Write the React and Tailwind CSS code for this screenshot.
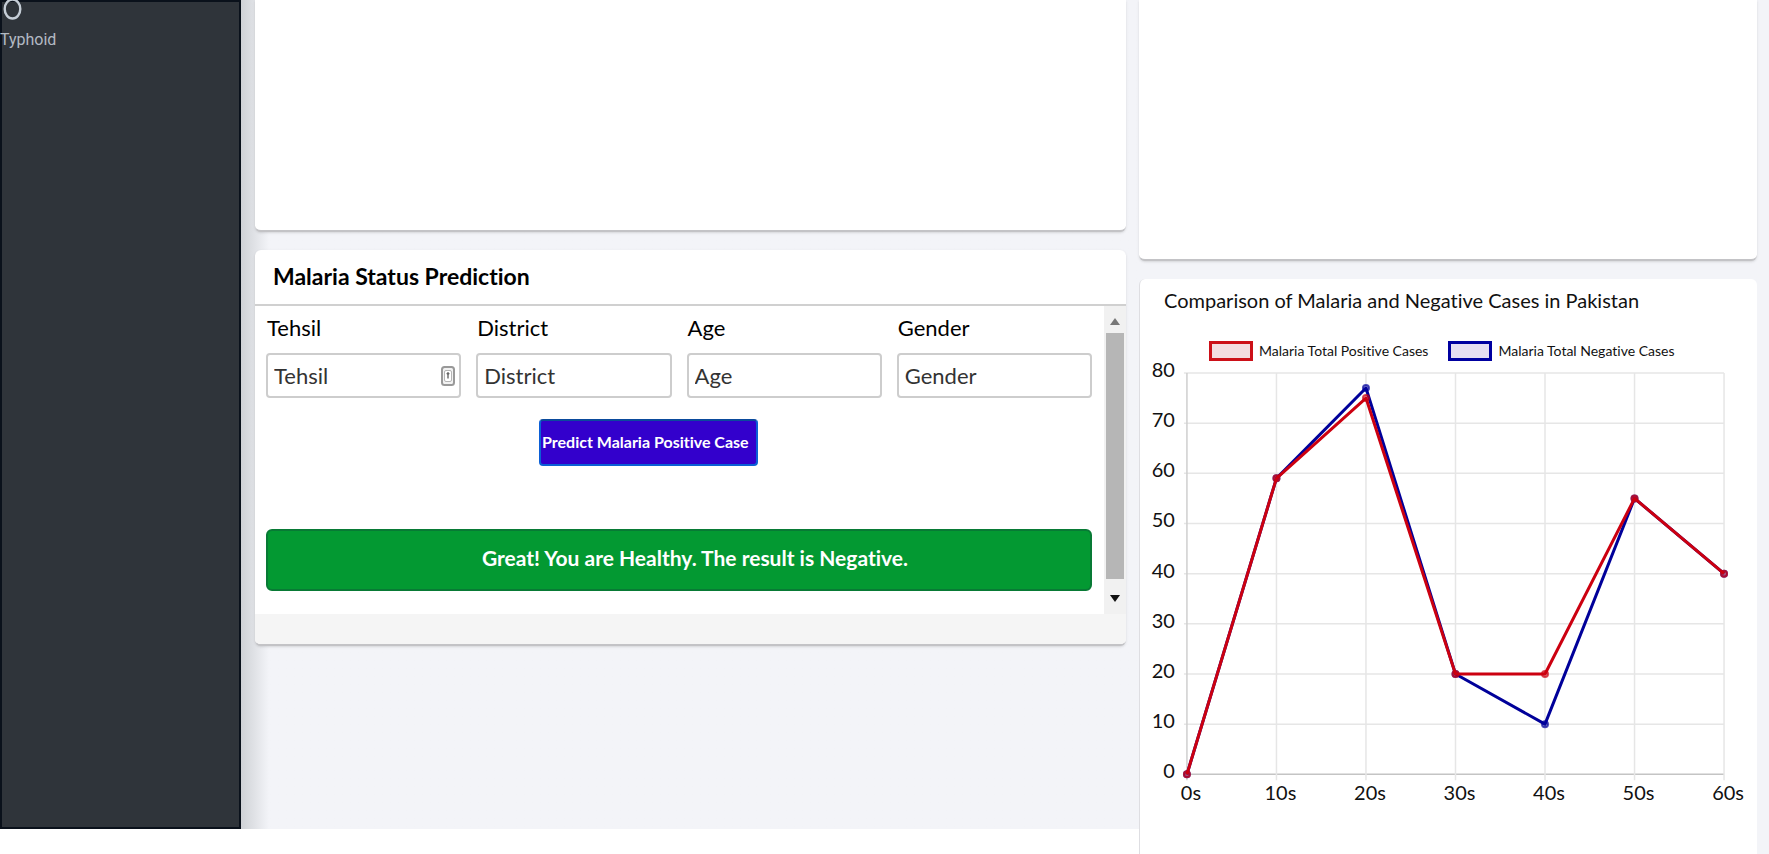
import { useState } from 'react'

const fields = [
  { id: 'tehsil', label: 'Tehsil', autofill: true },
  { id: 'district', label: 'District' },
  { id: 'age', label: 'Age' },
  { id: 'gender', label: 'Gender' },
]

const positive = [0, 59, 75, 20, 20, 55, 40]
const negative = [0, 59, 77, 20, 10, 55, 40]
const seconds = [0, 10, 20, 30, 40, 50, 60]
const ticks = [80, 70, 60, 50, 40, 30, 20, 10, 0]

// Plot area inside the chart viewBox
const plot = { left: 47, right: 585, top: 12, bottom: 414 }
const px = (i) => plot.left + (i * (plot.right - plot.left)) / (seconds.length - 1)
const py = (v) => plot.bottom - (v * (plot.bottom - plot.top)) / 80

function Series({ values, color }) {
  return (
    <g fill="none" stroke={color}>
      <polyline
        points={values.map((v, i) => `${px(i)},${py(v)}`).join(' ')}
        strokeWidth="3"
        strokeLinejoin="round"
      />
      {values.map((v, i) => (
        <circle key={i} cx={px(i)} cy={py(v)} r="3" strokeWidth="2" fill={color} fillOpacity="0.4" strokeOpacity="0.7" />
      ))}
    </g>
  )
}

function CasesChart() {
  return (
    <svg viewBox="0 0 618 446" className="block w-full overflow-visible" role="img" aria-label="Malaria cases over time">
      <g strokeWidth="1.5">
        {ticks.map((t) => (
          <line key={t} x1={plot.left - 3} x2={plot.right} y1={py(t)} y2={py(t)} stroke={t === 0 ? '#c4c4c4' : '#e6e6e6'} />
        ))}
        {seconds.map((s, i) => (
          <line key={s} x1={px(i)} x2={px(i)} y1={plot.top} y2={plot.bottom + 6} stroke={i === 0 ? '#cfcfcf' : '#e6e6e6'} />
        ))}
      </g>
      <Series values={negative} color="#00009a" />
      <Series values={positive} color="#cc0010" />
      <g fill="#111" fontSize="20">
        {ticks.map((t) => (
          <text key={t} x="35" y={py(t) + 4} textAnchor="end">{t}</text>
        ))}
        {seconds.map((s, i) => (
          <text key={s} x={px(i) + 4} y={plot.bottom + 26} textAnchor="middle">{s}s</text>
        ))}
      </g>
    </svg>
  )
}

function Legend({ swatch, children }) {
  return (
    <li className="flex items-center gap-1.5">
      <span className={`h-5 w-11 border-3 ${swatch}`} />
      {children}
    </li>
  )
}

function Sidebar() {
  return (
    <aside className="w-[241px] shrink-0 overflow-hidden bg-[#2f343a] text-[#b3bac3] shadow-[inset_0_0_0_2px_#0a111b]">
      <a href="#typhoid" className="block font-['Roboto'] text-base leading-5">
        <svg viewBox="0 0 24 30" className="h-[30px] w-6" fill="none" stroke="#c5cdd6" strokeWidth="2.4">
          <ellipse cx="12.5" cy="9" rx="7.8" ry="9.5" />
        </svg>
        Typhoid
      </a>
    </aside>
  )
}

function ScrollRail() {
  return (
    <div className="flex w-[22px] shrink-0 flex-col items-center bg-[#f1f1f1]" aria-hidden="true">
      <svg viewBox="0 0 10 7" className="mt-3 mb-2 h-[7px] w-[10px]"><path d="M0 7 5 0l5 7z" fill="#777" /></svg>
      <div className="w-[18px] flex-1 bg-[#b6b6b6]" />
      <svg viewBox="0 0 10 7" className="mt-4 mb-3 h-[7px] w-[10px]"><path d="M0 0l5 7 5-7z" fill="#111" /></svg>
    </div>
  )
}

function PredictionCard() {
  const [form, setForm] = useState({ tehsil: '', district: '', age: '', gender: '' })

  return (
    <section className="overflow-hidden rounded-md border-b-2 border-[#c3c3c6] bg-white shadow-sm">
      <h2 className="border-b-2 border-[#d0d0d0] pt-[11px] pb-[13px] pl-[18px] text-[23px] leading-[30px] font-bold text-black">
        Malaria Status Prediction
      </h2>
      <div className="flex h-[308px]">
        <form className="min-w-0 flex-1 pr-3 pl-[11px]" onSubmit={(e) => e.preventDefault()}>
          <div className="grid grid-cols-4 gap-[15px] pt-[7px]">
            {fields.map(({ id, label, autofill }) => (
              <div key={id} className="relative">
                <label htmlFor={id} className="block pl-px text-[22px] leading-[30px] text-black">{label}</label>
                <input
                  id={id}
                  placeholder={label}
                  value={form[id]}
                  onChange={(e) => setForm({ ...form, [id]: e.target.value })}
                  className="mt-[10px] h-[45px] w-full rounded-sm border-2 border-[#cdcdcd] bg-white pl-[6px] text-[22px] text-[#333] outline-none placeholder:text-[#333]"
                />
                {autofill && (
                  <svg viewBox="0 0 14 20" className="absolute right-[6px] bottom-3 h-5 w-[14px]" aria-hidden="true">
                    <rect x="1" y="1" width="12" height="18" rx="2.5" fill="#f2f2f2" stroke="#999" strokeWidth="2" />
                    <rect x="3.5" y="4.5" width="7" height="11" rx="1.5" fill="#fff" stroke="#b5b5b5" />
                    <path d="M7 6.5v6M5.8 8.2 7 6.8l1.2 1.4" fill="none" stroke="#666" strokeWidth="1.4" />
                  </svg>
                )}
              </div>
            ))}
          </div>
          <div className="flex justify-center pt-[21px] pr-[61px]">
            <button
              type="submit"
              className="h-[47px] w-[219px] rounded-sm border-2 border-[#0b5fd6] border-t-[#0a4a9c] bg-[#3300cc] pb-[2px] pl-px text-left text-base font-bold whitespace-nowrap text-white"
            >
              Predict Malaria Positive Case
            </button>
          </div>
          <p
            role="status"
            className="mt-[63px] flex h-[62px] items-center justify-center rounded-md border-2 border-[#087a35] bg-[#039932] pb-1 pl-8 text-[21px] font-bold text-white"
          >
            Great! You are Healthy. The result is Negative.
          </p>
        </form>
        <ScrollRail />
      </div>
      <div className="h-[30px] bg-[#f5f5f5]" />
    </section>
  )
}

export default function App() {
  return (
    <div className="grid min-h-screen grid-cols-[1139fr_630fr] bg-white font-['Lato',sans-serif] [font-variant-ligatures:none]">
      <div className="mb-[25px] flex min-w-0">
        <Sidebar />
        <main className="min-w-0 flex-1 bg-[#f3f4f8] bg-linear-to-r from-[#cfd2d6] via-[#f3f4f8] via-[28px] to-[#f3f4f8] pr-[13px] pl-[14px]">
          <section className="mb-[18px] h-[232px] rounded-b-md border-b-2 border-[#c3c3c6] bg-white shadow-sm" />
          <PredictionCard />
        </main>
      </div>
      <div className="flex min-w-0 flex-col gap-[18px] bg-[#f3f4f8] pr-3">
        <section className="h-[261px] rounded-b-md border-b-2 border-[#c3c3c6] bg-white shadow-sm" />
        <section className="flex-1 rounded-t-md border-l border-[#dedee2] bg-white">
          <h2 className="pt-1.5 pl-6 text-[20px] leading-[30px] text-[#111]">
            Comparison of Malaria and Negative Cases in Pakistan
          </h2>
          <ul className="mt-[26px] flex gap-5 pl-[69px] text-sm leading-5 text-[#111]">
            <Legend swatch="border-[#cc1018] bg-[#f3dde0]">Malaria Total Positive Cases</Legend>
            <Legend swatch="border-[#0000a0] bg-[#e6dff2]">Malaria Total Negative Cases</Legend>
          </ul>
          <CasesChart />
        </section>
      </div>
    </div>
  )
}
